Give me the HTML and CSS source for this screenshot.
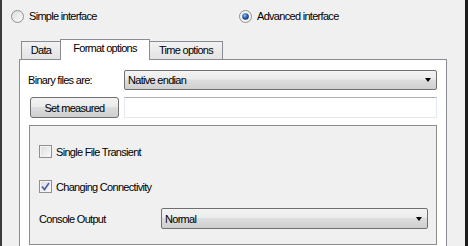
FILE: index.html
```html
<!DOCTYPE html>
<html lang="en">
<head>
    <meta charset="UTF-8">
    <title>Reader options</title>
    <link rel="stylesheet" href="styles.css">
</head>
<body>
    <div class="window">
        <div class="radios">
            <label class="radio">
                <svg class="radio-mark" width="13" height="13" viewBox="0 0 13 13">
                    <defs>
                        <linearGradient id="rg" x1="0" y1="0" x2="1" y2="1">
                            <stop offset="0" stop-color="#dcdcdc"/>
                            <stop offset="1" stop-color="#fbfbfb"/>
                        </linearGradient>
                    </defs>
                    <circle cx="6.5" cy="6.5" r="6" fill="url(#rg)" stroke="#8e8f8f"/>
                </svg>
                <span>Simple interface</span>
            </label>
            <label class="radio radio-second">
                <svg class="radio-mark" width="13" height="13" viewBox="0 0 13 13">
                    <defs>
                        <radialGradient id="dot" cx="0.4" cy="0.35" r="0.7">
                            <stop offset="0" stop-color="#9cc2eb"/>
                            <stop offset="0.5" stop-color="#2c62b4"/>
                            <stop offset="1" stop-color="#0d2f6b"/>
                        </radialGradient>
                    </defs>
                    <circle cx="6.5" cy="6.5" r="6" fill="#f4f4f4" stroke="#8e8f8f"/>
                    <circle cx="6.5" cy="6.5" r="3.3" fill="url(#dot)"/>
                </svg>
                <span>Advanced interface</span>
            </label>
        </div>

        <div class="tabs">
            <div class="tab tab-first">Data</div>
            <div class="tab tab-active">Format options</div>
            <div class="tab tab-last">Time options</div>
        </div>

        <div class="pane">
            <div class="form-row">
                <div class="label">Binary files are:</div>
                <div class="combo combo-wide">
                    <span>Native endian</span>
                    <span class="arrow"></span>
                </div>
            </div>
            <div class="form-row row-gap">
                <button class="button">Set measured</button>
                <div class="edit"></div>
            </div>

            <div class="frame">
                <label class="check">
                    <span class="box"></span>
                    <span>Single File Transient</span>
                </label>
                <label class="check check-second">
                    <span class="box">
                        <svg width="9" height="9" viewBox="0 0 9 9">
                            <path d="M1 4.5 L3.5 7.5 L8 1" fill="none" stroke="#4a64a6" stroke-width="1.7"/>
                        </svg>
                    </span>
                    <span>Changing Connectivity</span>
                </label>
                <div class="console-row">
                    <div class="console-label">Console Output</div>
                    <div class="combo combo-console">
                        <span>Normal</span>
                        <span class="arrow"></span>
                    </div>
                </div>
            </div>
        </div>
    </div>
</body>
</html>
```

FILE: styles.css
```css
* {
    margin: 0;
    padding: 0;
    box-sizing: border-box;
}

html, body {
    width: 468px;
    height: 246px;
    overflow: hidden;
    background: #f0f0f0;
}

body {
    font-family: "Liberation Sans", Arial, sans-serif;
    font-size: 11px;
    letter-spacing: -0.7px;
    color: #000;
}

.window {
    height: 246px;
    border-left: 2px solid #3a3a3a;
    border-right: 3px solid #1c1c1c;
    overflow: hidden;
}

.radios {
    display: flex;
    align-items: center;
    height: 31px;
    padding-left: 9px;
    padding-top: 1px;
}

.radio {
    display: flex;
    align-items: center;
    gap: 5px;
}

.radio-second {
    margin-left: auto;
    width: 226px;
}

.radio-mark {
    display: block;
}

.tabs {
    display: flex;
    align-items: flex-end;
    height: 20px;
    margin-top: 8px;
    padding-left: 19px;
    position: relative;
    z-index: 1;
}

.tab {
    height: 18px;
    border: 1px solid #898c95;
    border-bottom: none;
    background: linear-gradient(#f2f2f2, #e3e3e3);
    display: flex;
    align-items: center;
    justify-content: center;
    padding-bottom: 1px;
}

.tab-first {
    width: 40px;
}

.tab-active {
    width: 90px;
    height: 21px;
    margin-bottom: -1px;
    margin-left: -1px;
    background: #fff;
    padding-bottom: 4px;
}

.tab-last {
    width: 74px;
    margin-left: -1px;
}

.pane {
    margin-left: 17px;
    width: 428px;
    height: 200px;
    border: 1px solid #898c95;
    background: #fff;
    padding: 10px 9px 0 8px;
}

.form-row {
    display: flex;
    align-items: center;
    height: 20px;
}

.row-gap {
    margin-top: 7px;
    height: 21px;
}

.label {
    width: 96px;
}

.combo {
    height: 20px;
    border: 1px solid #707070;
    border-radius: 2px;
    background: linear-gradient(#f3f3f3 0%, #ebebeb 45%, #dddddd 50%, #cfcfcf 100%);
    display: flex;
    align-items: center;
    justify-content: space-between;
    padding: 0 5px 0 3px;
}

.combo-wide {
    width: 313px;
}

.arrow {
    width: 0;
    height: 0;
    border-left: 3.5px solid transparent;
    border-right: 3.5px solid transparent;
    border-top: 4px solid #000;
}

.button {
    font: inherit;
    letter-spacing: inherit;
    width: 89px;
    height: 21px;
    margin-left: 2px;
    border: 1px solid #707070;
    border-radius: 3px;
    background: linear-gradient(#f2f2f2 0%, #ebebeb 45%, #dddddd 50%, #cfcfcf 100%);
    color: #000;
}

.edit {
    margin-left: 5px;
    width: 313px;
    height: 21px;
    background: #fff;
    border: 1px solid #e3e9ef;
    border-top-color: #abadb3;
}

.frame {
    margin-top: 7px;
    margin-left: 1px;
    width: 408px;
    height: 120px;
    border: 1px solid #8c8c8c;
    background: #f0f0f0;
    padding: 19px 8px 0 9px;
}

.check {
    display: flex;
    align-items: center;
    gap: 4px;
    height: 13px;
}

.check-second {
    margin-top: 22px;
}

.box {
    width: 13px;
    height: 13px;
    border: 1px solid #8e8f8f;
    background: linear-gradient(135deg, #dcdcdc, #fafafa);
    box-shadow: inset 0 0 0 1px #f4f4f4;
    display: flex;
    align-items: center;
    justify-content: center;
}

.console-row {
    display: flex;
    align-items: center;
    margin-top: 15px;
    height: 21px;
}

.console-label {
    width: 122px;
}

.combo-console {
    width: 267px;
    height: 21px;
}
```
